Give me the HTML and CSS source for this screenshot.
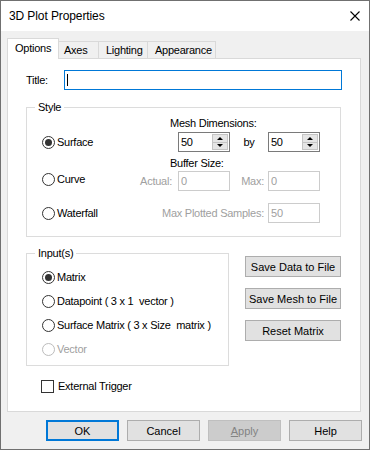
FILE: index.html
```html
<!DOCTYPE html>
<html lang="en">
<head>
  <meta charset="UTF-8" />
  <title>3D Plot Properties</title>
  <link rel="stylesheet" href="styles.css">
</head>
<body>

  <div class="window">
    <div class="titlebar">
      <span class="caption">3D Plot Properties</span>
      <svg class="close" width="10" height="10" viewBox="0 0 10 10" aria-label="Close">
        <path d="M0.5 0.5 L9.5 9.5 M9.5 0.5 L0.5 9.5" stroke="#000" stroke-width="1.1" fill="none"/>
      </svg>
    </div>

    <div class="client">
      <!-- Tab strip -->
      <div class="tabs">
        <div class="tab active tab-options">Options</div>
        <div class="tab tab-axes">Axes</div>
        <div class="tab tab-lighting">Lighting</div>
        <div class="tab tab-appearance">Appearance</div>
      </div>

      <div class="panel">
        <div class="title-row">
          <label class="title-label" for="plotTitle">Title:</label>
          <input id="plotTitle" class="textbox title-box" type="text" value="">
        </div>

        <fieldset class="group style-group">
          <legend>Style</legend>
          <div class="style-grid">
            <div class="section-label mesh-label">Mesh Dimensions:</div>

            <label class="radio r-surface"><span class="circle checked"></span>Surface</label>
            <div class="spin spin-a">
              <span class="spin-value">50</span>
              <span class="spin-btns"><span class="up"></span><span class="down"></span></span>
            </div>
            <span class="by">by</span>
            <div class="spin spin-b">
              <span class="spin-value">50</span>
              <span class="spin-btns"><span class="up"></span><span class="down"></span></span>
            </div>

            <div class="section-label buffer-label">Buffer Size:</div>

            <label class="radio r-curve"><span class="circle"></span>Curve</label>
            <span class="field-label dis actual-label">Actual:</span>
            <input class="textbox dis actual-box" type="text" value="0" disabled>
            <span class="field-label dis max-label">Max:</span>
            <input class="textbox dis max-box" type="text" value="0" disabled>

            <label class="radio r-waterfall"><span class="circle"></span>Waterfall</label>
            <span class="field-label dis samples-label">Max Plotted Samples:</span>
            <input class="textbox dis samples-box" type="text" value="50" disabled>
          </div>
        </fieldset>

        <div class="lower">
          <fieldset class="group input-group">
            <legend>Input(s)</legend>
            <label class="radio"><span class="circle checked"></span>Matrix</label>
            <label class="radio"><span class="circle"></span>Datapoint ( 3 x 1&nbsp; vector )</label>
            <label class="radio"><span class="circle"></span>Surface Matrix ( 3 x Size&nbsp; matrix )</label>
            <label class="radio disabled"><span class="circle"></span>Vector</label>
          </fieldset>

          <div class="side-buttons">
            <button class="btn">Save Data to File</button>
            <button class="btn">Save Mesh to File</button>
            <button class="btn">Reset Matrix</button>
          </div>
        </div>

        <label class="check"><span class="box"></span>External Trigger</label>
      </div>

      <div class="footer">
        <button class="btn default">OK</button>
        <button class="btn">Cancel</button>
        <button class="btn disabled"><u>A</u>pply</button>
        <button class="btn">Help</button>
      </div>
    </div>
  </div>

</body>
</html>
```

FILE: styles.css
```css
* {
  box-sizing: border-box;
}
body {
  margin: 0;
  font-family: "Liberation Sans", Arial, sans-serif;
  font-size: 11px;
  letter-spacing: -0.25px;
  color: #000;
}

.window {
  width: 370px;
  height: 450px;
  border: 1px solid #707070;
  background: #f0f0f0;
  display: flex;
  flex-direction: column;
}

/* Title bar */
.titlebar {
  height: 30px;
  background: #fff;
  display: flex;
  align-items: center;
  padding-left: 8px;
  flex: none;
}
.caption {
  font-size: 12px;
  letter-spacing: -0.1px;
}
.close {
  margin-left: auto;
  margin-right: 9px;
}

.client {
  flex: 1;
  padding: 7px 8px 0 6px;
}

/* Tabs */
.tabs {
  display: flex;
  align-items: flex-end;
  height: 20px;
  position: relative;
  z-index: 1;
}
.tab {
  height: 17px;
  line-height: 17px;
  padding-left: 6px;
  background: #f0f0f0;
  border: 1px solid #d9d9d9;
  border-bottom: none;
  margin-left: -1px;
  white-space: nowrap;
}
.tab.active {
  height: 21px;
  line-height: 19px;
  margin-left: 0;
  margin-bottom: -1px;
  background: #fff;
}
.tab-options { width: 52px; padding-left: 7px; }
.tab-axes { width: 41px; padding-left: 5px; }
.tab-lighting { width: 50px; padding-left: 7px; }
.tab-appearance { width: 69px; padding-left: 7px; }

.panel {
  width: 354px;
  height: 354px;
  background: #fff;
  border: 1px solid #d9d9d9;
  padding: 11px 0 0 18px;
}

/* Text boxes */
.textbox {
  height: 20px;
  border: 1px solid #7a7a7a;
  background: #fff;
  font: inherit;
  color: #000;
  padding: 0 0 0 2px;
  margin: 0;
  outline: none;
}
.textbox.dis {
  border-color: #cccccc;
  color: #a0a0a0;
  background: #fff;
  -webkit-text-fill-color: #a0a0a0;
}

.title-row {
  display: flex;
  align-items: center;
  height: 20px;
}
.title-label {
  width: 38px;
}
.title-box {
  width: 278px;
  border-color: #0078d7;
  /* text caret */
  background: #fff linear-gradient(#000, #000) no-repeat 2px 3px / 1px 12px;
}

/* Group boxes */
.group {
  margin: 0;
  border: 1px solid #dcdcdc;
  min-width: 0;
}
.group legend {
  padding: 0 3px;
  margin-left: -7px;
  line-height: 14px;
}

.style-group {
  width: 315px;
  margin-top: 10px;
  padding: 2px 0 13px 15px;
}
.style-grid {
  display: grid;
  grid-template-columns: 97px 39px 52px 38px 52px;
  grid-template-rows: 16px 23px 16px 32px 20px;
}
.section-label {
  grid-column: 2 / -1;
  padding-left: 31px;
  line-height: 14px;
}
.mesh-label { grid-row: 1; align-self: start; }
.buffer-label { grid-row: 3; align-self: center; }

.r-surface { grid-row: 2; grid-column: 1; }
.r-curve { grid-row: 4; grid-column: 1; margin-top: -2px; }
.r-waterfall { grid-row: 5; grid-column: 1; }

.spin-a { grid-row: 2; grid-column: 3; }
.spin-b { grid-row: 2; grid-column: 5; }
.by {
  grid-row: 2;
  grid-column: 4;
  text-align: center;
  line-height: 20px;
  height: 20px;
}

.field-label {
  line-height: 20px;
  height: 20px;
  text-align: right;
  white-space: nowrap;
}
.field-label.dis {
  color: #a0a0a0;
}
.actual-label { grid-row: 4; grid-column: 2; padding-right: 6px; }
.max-label { grid-row: 4; grid-column: 4; padding-right: 4px; }
.samples-label { grid-row: 5; grid-column: 2 / 5; padding-right: 4px; }
.actual-box { grid-row: 4; grid-column: 3; width: 52px; }
.max-box { grid-row: 4; grid-column: 5; width: 52px; }
.samples-box { grid-row: 5; grid-column: 5; width: 52px; }

/* Spin box */
.spin {
  width: 52px;
  height: 20px;
  border: 1px solid #7a7a7a;
  display: flex;
  align-items: center;
}
.spin-value {
  padding-left: 2px;
}
.spin-btns {
  margin-left: auto;
  margin-right: 1px;
  width: 16px;
  height: 16px;
  display: flex;
  flex-direction: column;
}
.spin-btns span {
  flex: 1;
  background: #e5e5e5;
  border: 1px solid #c4c4c4;
  display: flex;
  align-items: center;
  justify-content: center;
}
.spin-btns .down {
  border-top: none;
}
.spin-btns .up::after,
.spin-btns .down::after {
  content: "";
  width: 0;
  height: 0;
  border-left: 3px solid transparent;
  border-right: 3px solid transparent;
}
.spin-btns .up::after {
  border-bottom: 3px solid #000;
}
.spin-btns .down::after {
  border-top: 3px solid #000;
}

/* Radio buttons */
.radio {
  display: flex;
  align-items: center;
  gap: 2px;
  height: 20px;
  white-space: nowrap;
}
.circle {
  width: 13px;
  height: 13px;
  border: 1px solid #333;
  border-radius: 50%;
  background: #fff;
  flex: none;
  padding: 2px;
}
.circle.checked::after {
  content: "";
  display: block;
  width: 7px;
  height: 7px;
  border-radius: 50%;
  background: #333;
}
.radio.disabled {
  color: #a0a0a0;
}
.radio.disabled .circle {
  border-color: #bcbcbc;
}

.lower {
  display: flex;
  gap: 16px;
  margin-top: 9px;
}
.input-group {
  width: 203px;
  padding: 9px 0 8px 15px;
  display: flex;
  flex-direction: column;
  gap: 8px;
}
.input-group .radio {
  height: 16px;
}

/* Buttons */
.btn {
  height: 21px;
  background: #e1e1e1;
  border: 1px solid #adadad;
  font: inherit;
  color: #000;
  padding: 0;
  margin: 0;
}
.btn.default {
  border: 2px solid #0078d7;
}
.btn.disabled {
  background: #cccccc;
  border-color: #bfbfbf;
  color: #838383;
}

.side-buttons {
  display: flex;
  flex-direction: column;
  gap: 11px;
  margin-top: 10px;
}
.side-buttons .btn {
  width: 96px;
}

/* Checkbox */
.check {
  display: flex;
  align-items: center;
  gap: 4px;
  margin-top: 13px;
  padding-left: 15px;
  line-height: 14px;
}
.check .box {
  width: 13px;
  height: 13px;
  border: 1px solid #333;
  background: #fff;
}

.footer {
  display: flex;
  justify-content: flex-end;
  gap: 8px;
  margin-top: 8px;
  margin-right: -1px;
}
.footer .btn {
  width: 73px;
}
```
